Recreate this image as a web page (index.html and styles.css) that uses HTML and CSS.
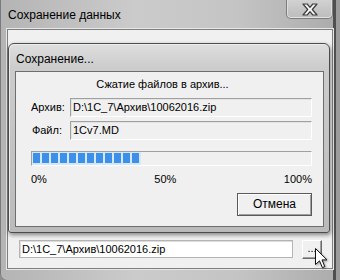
FILE: index.html
```html
<!DOCTYPE html>
<html lang="ru">
<head>
    <meta charset="UTF-8">
    <title>Сохранение данных</title>
    <link rel="stylesheet" href="styles.css">
</head>
<body>
    <div class = 'window'>
        <div class = 'titlebar'>
            <span class = 'title'>Сохранение данных</span>
            <div class = 'close_btn'>
                <svg width="18" height="13" viewBox="0 0 18 13">
                    <path d="M2 1 H6.2 L9 4.3 L11.8 1 H16 L11.3 6.5 L16 12 H11.8 L9 8.7 L6.2 12 H2 L6.7 6.5 Z" fill="#f4f4f4" stroke="#3e3e3e" stroke-width="1.2" stroke-linejoin="round"/>
                </svg>
            </div>
        </div>
        <div class = 'client'>
            <div class = 'path_row'>
                <div class = 'path_field'>D:\1C_7\Архив\10062016.zip</div>
                <div class = 'browse_btn'>...</div>
            </div>
        </div>

        <div class = 'dialog'>
            <div class = 'dialog_title'>Сохранение...</div>
            <div class = 'dialog_client'>
                <div class = 'status'>Сжатие файлов в архив...</div>
                <div class = 'fields'>
                    <label class = 'field_label'>Архив:</label>
                    <div class = 'field'>D:\1C_7\Архив\10062016.zip</div>
                    <label class = 'field_label'>Файл:</label>
                    <div class = 'field'>1Cv7.MD</div>
                </div>
                <div class = 'progress'>
                    <div class = 'progress_fill' id = 'progress_fill'></div>
                </div>
                <div class = 'percents'>
                    <span>0%</span>
                    <span>50%</span>
                    <span>100%</span>
                </div>
                <div class = 'cancel_btn'>Отмена</div>
            </div>
        </div>

        <svg class = 'cursor' width="14" height="22" viewBox="0 0 14 22">
            <path d="M0.5 0.5 V16.5 L4.5 12.8 L7.4 19.6 L9.8 18.6 L7 11.9 H12 Z" fill="#fff" stroke="#111" stroke-width="1" stroke-linejoin="round"/>
        </svg>
    </div>
    <script>
        const fill = document.getElementById('progress_fill');
        for (let i = 0; i < 12; i++) {
            const block = document.createElement('div');
            block.className = 'block';
            fill.appendChild(block);
        }
    </script>
</body>
</html>
```

FILE: styles.css
```css
body{
    margin: 0;
    width: 340px;
    height: 280px;
    overflow: hidden;
    background-color: #8f8f8f;
}

.window{
    position: relative;
    display: flex;
    flex-direction: column;
    width: 340px;
    height: 280px;
    padding: 0 7px;
    box-sizing: border-box;
    background: linear-gradient(90deg, #b4b4b4 0, #cbcbcb 40%, #c4c4c4 70%, #ababab 100%);
    box-shadow: inset -4px 0 0 #9c9c9c, inset -7px 0 0 #4f4f4f, inset 1px 0 0 #7a7a7a;
    border-bottom-left-radius: 6px;
    font-family: "Liberation Sans", Arial, sans-serif;
}

.titlebar{
    display: flex;
    align-items: flex-start;
    height: 29px;
}

.title{
    padding: 8px 0 0 1px;
    font-size: 12px;
    line-height: 15px;
    color: #000;
}

.close_btn{
    display: flex;
    align-items: center;
    justify-content: center;
    margin-left: auto;
    width: 47px;
    height: 19px;
    box-sizing: border-box;
    border: 1px solid #7c7c7c;
    border-top: 0;
    border-radius: 0 0 5px 5px;
    background: linear-gradient(180deg, #d2d2d2, #c4c4c4 60%, #bcbcbc);
    box-shadow: inset 0 -1px 0 #e2e2e2, inset 1px 0 0 #dedede, inset -1px 0 0 #dedede;
}

.client{
    display: flex;
    flex-direction: column;
    justify-content: flex-end;
    height: 240px;
    padding: 0 10px 9px 11px;
    box-sizing: border-box;
    border: 1px solid #7e7e7e;
    background-color: #f0f0f0;
    box-shadow: 0 0 0 1px #e8e8e8;
}

.path_row{
    display: flex;
    align-items: flex-start;
    gap: 9px;
}

.path_field{
    width: 274px;
    height: 18px;
    box-sizing: border-box;
    padding-left: 2px;
    border: 1px solid #b4b4b4;
    background-color: #fff;
    box-shadow: inset 1px 1px 0 #dcdcdc;
    font-size: 11px;
    line-height: 16px;
}

.browse_btn{
    width: 20px;
    height: 19px;
    box-sizing: border-box;
    border: 1px solid;
    border-color: #fff #6a6a6a #6a6a6a #fff;
    background-color: #f0f0f0;
    box-shadow: inset -1px -1px 0 #a0a0a0;
    text-align: center;
    font-size: 11px;
    line-height: 15px;
}

.dialog{
    position: absolute;
    left: 8px;
    top: 43px;
    display: flex;
    flex-direction: column;
    width: 322px;
    height: 190px;
    box-sizing: border-box;
    padding: 0 5px 5px 6px;
    border: 1px solid #4c4c4c;
    border-radius: 6px 6px 3px 3px;
    background: linear-gradient(180deg, #dedede 0, #cccccc 24px, #c2c2c2 60%, #bababa 100%);
    box-shadow: inset 1px 1px 0 #ececec, 1px 2px 4px rgba(0, 0, 0, 0.45);
}

.dialog_title{
    height: 27px;
    padding: 8px 0 0 1px;
    box-sizing: border-box;
    font-size: 12px;
    line-height: 15px;
}

.dialog_client{
    display: flex;
    flex-direction: column;
    flex: 1;
    padding: 6px 11px 0 15px;
    border: 1px solid #6e6e6e;
    background-color: #f0f0f0;
    font-size: 11px;
    line-height: 13px;
}

.status{
    text-align: center;
    padding-right: 18px;
}

.fields{
    display: grid;
    grid-template-columns: 31px 1fr;
    column-gap: 8px;
    row-gap: 4px;
    margin-top: 7px;
    align-items: center;
}

.field_label{
    text-align: right;
}

.field{
    height: 19px;
    box-sizing: border-box;
    padding: 2px 0 0 2px;
    border: 1px solid;
    border-color: #a0a0a0 #ffffff #ffffff #a0a0a0;
    box-shadow: inset 1px 1px 0 #e3e3e3;
}

.progress{
    display: flex;
    height: 15px;
    margin-top: 11px;
    box-sizing: border-box;
    border: 1px solid;
    border-color: #a0a0a0 #ffffff #ffffff #a0a0a0;
}

.progress_fill{
    display: flex;
    gap: 2px;
    padding: 1px 2px 1px 1px;
    background-color: #d4e8fb;
}

.block{
    width: 7px;
    height: 10px;
    background-color: #3d8fe7;
}

.percents{
    display: flex;
    justify-content: space-between;
    margin-top: 7px;
}

.cancel_btn{
    align-self: flex-end;
    width: 75px;
    height: 23px;
    margin-top: 7px;
    box-sizing: border-box;
    border: 1px solid #5a5a5a;
    background-color: #f0f0f0;
    box-shadow: inset 1px 1px 0 #fff, inset -1px -1px 0 #a0a0a0;
    text-align: center;
    font-size: 12px;
    line-height: 20px;
}

.cursor{
    position: absolute;
    left: 315px;
    top: 248px;
    filter: drop-shadow(1px 1px 1px rgba(0, 0, 0, 0.35));
}
```
